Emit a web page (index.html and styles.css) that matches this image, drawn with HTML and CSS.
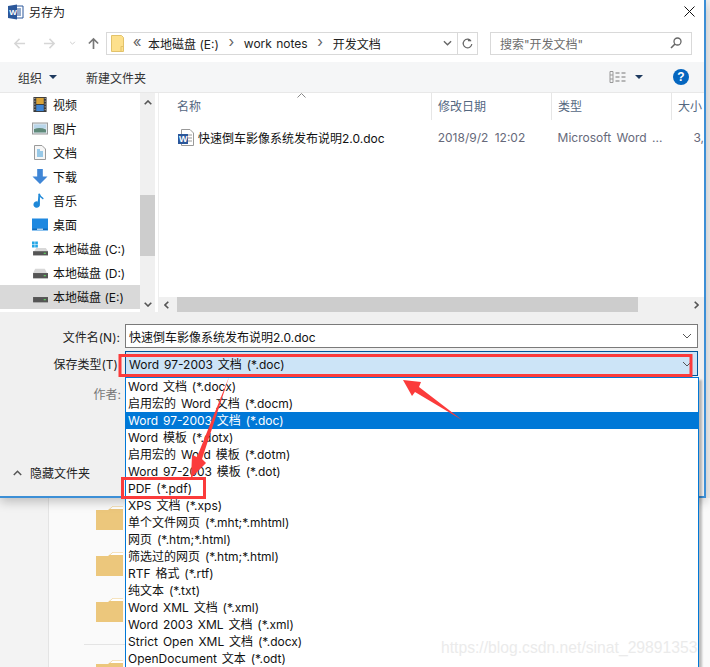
FILE: index.html
```html
<!DOCTYPE html>
<html lang="zh-CN">
<head>
<meta charset="utf-8">
<title>另存为</title>
<link rel="stylesheet" href="styles.css">
</head>
<body>
<div class="stage">
  <div class="dialog">
    <header class="titlebar">
      <svg class="word-icon" viewBox="0 0 16 16"><path d="M7 2h8v12H7z" fill="#fff" stroke="#2b579a"/><path d="M9 5h4M9 7h4M9 9h4M9 11h4" stroke="#2b579a"/><path d="M0 2l9-1.500v15L0 14z" fill="#2b579a"/><text x="1.200" y="11" class="word-w">W</text></svg>
      <span class="title">另存为</span>
      <svg class="close" viewBox="0 0 11 11"><path d="M.5.500l10 10M10.500.500l-10 10" stroke="#111" fill="none"/></svg>
    </header>
    <div class="addressrow">
      <svg class="nav-icon light" viewBox="0 0 14 14"><path d="M13 7H2M7 2L2 7l5 5" fill="none" stroke="currentColor" stroke-width="1.600"/></svg>
      <svg class="nav-icon light" viewBox="0 0 14 14"><path d="M1 7h11M7 2l5 5-5 5" fill="none" stroke="currentColor" stroke-width="1.600"/></svg>
      <svg class="nav-caret" viewBox="0 0 8 5"><path d="M1 1l3 3 3-3" fill="none" stroke="#ccc" stroke-width="1.200"/></svg>
      <svg class="nav-icon dark" viewBox="0 0 14 14"><path d="M7 13V2M2 7l5-5 5 5" fill="none" stroke="currentColor" stroke-width="1.800"/></svg>
      <div class="address">
        <svg class="addr-folder" viewBox="0 0 13 17"><path d="M.5.500h10l2 2v14H.5z" fill="#fde08c" stroke="#e2c26a"/><path d="M10 16.500v-5h2.500" fill="none" stroke="#e2c26a"/></svg>
        <span class="crumb-sep wide">«</span>
        <span class="crumb">本地磁盘 (E:)</span>
        <span class="crumb-sep">›</span>
        <span class="crumb spaced">work notes</span>
        <span class="crumb-sep">›</span>
        <span class="crumb">开发文档</span>
        <span class="addr-fill"></span>
        <svg class="addr-caret" viewBox="0 0 10 6"><path d="M1 1l4 4 4-4" fill="none" stroke="#666" stroke-width="1.500"/></svg>
        <span class="addr-refresh"><svg viewBox="0 0 12 12"><path d="M9.800 3.200A4.700 4.700 0 1 0 10.700 6.500" fill="none" stroke="#666" stroke-width="1.300"/><path d="M6.500.500l3.800 3H6.500z" fill="#666"/></svg></span>
      </div>
      <div class="search">
        <span class="search-text">搜索"开发文档"</span>
        <svg class="search-icon" viewBox="0 0 12 12"><circle cx="7.500" cy="4.500" r="3.500" fill="none" stroke="#666" stroke-width="1.300"/><path d="M5 7l-4 4" stroke="#666" stroke-width="1.600"/></svg>
      </div>
    </div>
    <div class="toolbar">
      <span class="tool">组织</span><span class="tool-caret"></span>
      <span class="tool new">新建文件夹</span>
      <span class="toolbar-fill"></span>
      <svg class="views" viewBox="0 0 16 12"><path d="M.5.500h3v11h-3zM.5 4h3M.5 8h3" fill="none" stroke="#999"/><path d="M6 2h4M12 2h4M6 6h4M12 6h4M6 10h4M12 10h4" stroke="#777"/></svg>
      <span class="tool-caret dark"></span>
      <span class="help">?</span>
    </div>
    <div class="browser">
      <nav class="sidebar">
        <ul class="nav-list">
          <li class="nav-item"><svg class="ni" viewBox="0 0 14 16"><rect width="14" height="16" fill="#3a3a3a"/><rect x="3" y="1" width="8" height="6.500" fill="#d9a43a"/><rect x="3" y="8.500" width="8" height="6.500" fill="#3f86d6"/><path d="M1 1.500h1M1 4.500h1M1 7.500h1M1 10.500h1M1 13.500h1M12 1.500h1M12 4.500h1M12 7.500h1M12 10.500h1M12 13.500h1" stroke="#ddd"/></svg>视频</li>
          <li class="nav-item"><svg class="ni" viewBox="0 0 16 12"><rect x=".5" y=".5" width="15" height="11" fill="#dfe8ee" stroke="#9a9a9a"/><path d="M2 2h12v4H2z" fill="#b9d6ea"/><path d="M2 10V6.500q6-2 12 .5v3z" fill="#5f8a7a"/></svg>图片</li>
          <li class="nav-item"><svg class="ni" viewBox="0 0 12 15"><path d="M.5.500H8l3.500 3.500v10.500H.5z" fill="#f6f6f6" stroke="#9a9a9a"/><path d="M3 5h3M3 7h6M3 9h6M3 11h6" stroke="#3a9bd8"/></svg>文档</li>
          <li class="nav-item"><svg class="ni" viewBox="0 0 16 16"><path d="M5 0h6v8h5l-8 8-8-8h5z" fill="#3f86d6"/></svg>下载</li>
          <li class="nav-item"><svg class="ni" viewBox="0 0 12 18"><path d="M5 1v12.500A3 3 0 1 1 3 11" fill="#1e88d8" stroke="#1e88d8" stroke-width="1.800"/><path d="M5 1q1 4 5 6" fill="none" stroke="#1e88d8" stroke-width="1.800"/></svg>音乐</li>
          <li class="nav-item"><svg class="ni" viewBox="0 0 16 12"><rect width="16" height="12" fill="#1e88e0"/><path d="M.5 10.700h15" stroke="#0d5ea8"/><path d="M5 10.700h6" stroke="#fff"/></svg>桌面</li>
          <li class="nav-item"><svg class="ni" viewBox="0 0 15 13"><path d="M0 0h2.500v2.500H0zM3 0h2.500v2.500H3zM0 3h2.500v2.500H0zM3 3h2.500v2.500H3z" fill="#22a5e5"/><path d="M2 9l2-3h9l2 3z" fill="#d8d8d8"/><rect x="1" y="9" width="14" height="4" fill="#555"/><rect x="11" y="10.500" width="2" height="1" fill="#5fdc5f"/></svg>本地磁盘 (C:)</li>
          <li class="nav-item"><svg class="ni" viewBox="0 0 15 13"><path d="M1 7l2-4h9l2 4z" fill="#d8d8d8"/><rect x="1" y="7" width="14" height="5" fill="#555"/><rect x="11" y="9" width="2" height="1" fill="#5fdc5f"/></svg>本地磁盘 (D:)</li>
          <li class="nav-item selected"><svg class="ni" viewBox="0 0 15 13"><path d="M1 7l2-4h9l2 4z" fill="#d8d8d8"/><rect x="1" y="7" width="14" height="5" fill="#555"/><rect x="11" y="9" width="2" height="1" fill="#5fdc5f"/></svg>本地磁盘 (E:)</li>
        </ul>
        <div class="vscroll">
          <svg class="sb-arrow" viewBox="0 0 8 5"><path d="M.7 4.300L4 1l3.300 3.300" fill="none" stroke="#555" stroke-width="1.600"/></svg>
          <span class="vthumb"></span>
          <svg class="sb-arrow bottom" viewBox="0 0 8 5"><path d="M.7.700L4 4 7.300.700" fill="none" stroke="#555" stroke-width="1.600"/></svg>
        </div>
      </nav>
      <section class="files">
        <div class="file-head">
          <span class="col name">名称</span>
          <span class="col date">修改日期</span>
          <span class="col type">类型</span>
          <span class="col size">大小</span>
          <svg class="sort" viewBox="0 0 9 5"><path d="M.5 4.500l4-4 4 4" fill="none" stroke="#888"/></svg>
        </div>
        <div class="file-row">
          <svg class="doc-icon" viewBox="0 0 16 17"><path d="M3.500.5H12l3.500 3.500v12.500h-12z" fill="#fff" stroke="#999"/><path d="M10 6h4M10 9h4M10 12h4" stroke="#999"/><rect y="5" width="10" height="10" fill="#2b579a"/><text x="1" y="13" class="word-w small">W</text></svg>
          <span class="f-name">快速倒车影像系统发布说明2.0.doc</span>
          <span class="f-date">2018/9/2 12:02</span>
          <span class="f-type">Microsoft Word ...</span>
          <span class="f-size">3,</span>
        </div>
        <div class="file-fill"></div>
        <div class="hscroll">
          <svg class="hs-arrow" viewBox="0 0 5 8"><path d="M4.300.7L1 4l3.300 3.300" fill="none" stroke="#555" stroke-width="1.600"/></svg>
          <span class="hthumb"></span>
          <svg class="hs-arrow" viewBox="0 0 5 8"><path d="M.7.7L4 4 .7 7.300" fill="none" stroke="#555" stroke-width="1.600"/></svg>
        </div>
      </section>
    </div>
    <div class="form">
      <div class="form-row first">
        <label class="f-label">文件名(N):</label>
        <div class="combo"><span class="combo-text">快速倒车影像系统发布说明2.0.doc</span><svg class="combo-caret" viewBox="0 0 10 6"><path d="M1 1l4 4 4-4" fill="none" stroke="#555"/></svg></div>
      </div>
      <div class="form-row second">
        <label class="f-label narrow">保存类型(T)</label>
        <div class="combo active"><span class="combo-text">Word 97-2003 文档 (*.doc)</span><svg class="combo-caret" viewBox="0 0 10 6"><path d="M1 1l4 4 4-4" fill="none" stroke="#555"/></svg></div>
      </div>
      <div class="form-row third">
        <label class="f-label meta">作者:</label>
      </div>
      <div class="hide-row">
        <svg class="hide-caret" viewBox="0 0 9 6"><path d="M.8 5L4.500 1.300 8.200 5" fill="none" stroke="#555" stroke-width="1.500"/></svg>
        <span>隐藏文件夹</span>
      </div>
    </div>
  </div>
  <div class="behind">
    <div class="behind-side"></div>
    <div class="behind-main">
      <svg class="b-folder" viewBox="0 0 27 24"><path d="M0 4h12l5-4h10v24H0z" fill="#ecc77c"/><path d="M14 3l3-2.500h10V3z" fill="#fff"/></svg>
      <svg class="b-folder" viewBox="0 0 27 24"><path d="M0 4h12l5-4h10v24H0z" fill="#ecc77c"/><path d="M14 3l3-2.500h10V3z" fill="#fff"/></svg>
      <svg class="b-folder" viewBox="0 0 27 24"><path d="M0 4h12l5-4h10v24H0z" fill="#ecc77c"/><path d="M14 3l3-2.500h10V3z" fill="#fff"/></svg>
      <span class="b-line"></span>
      <svg class="b-folder last" viewBox="0 0 27 24"><path d="M0 4h12l5-4h10v24H0z" fill="#ecc77c"/><path d="M14 3l3-2.500h10V3z" fill="#fff"/></svg>
    </div>
  </div>
  <ul class="dropdown">
    <li>Word 文档 (*.docx)</li>
    <li>启用宏的 Word 文档 (*.docm)</li>
    <li class="on">Word 97-2003 文档 (*.doc)</li>
    <li>Word 模板 (*.dotx)</li>
    <li>启用宏的 Word 模板 (*.dotm)</li>
    <li>Word 97-2003 模板 (*.dot)</li>
    <li>PDF (*.pdf)</li>
    <li>XPS 文档 (*.xps)</li>
    <li>单个文件网页 (*.mht;*.mhtml)</li>
    <li>网页 (*.htm;*.html)</li>
    <li>筛选过的网页 (*.htm;*.html)</li>
    <li>RTF 格式 (*.rtf)</li>
    <li>纯文本 (*.txt)</li>
    <li>Word XML 文档 (*.xml)</li>
    <li>Word 2003 XML 文档 (*.xml)</li>
    <li>Strict Open XML 文档 (*.docx)</li>
    <li>OpenDocument 文本 (*.odt)</li>
  </ul>
  <svg class="marks" viewBox="0 0 710 667">
    <rect x="120" y="355.500" width="571" height="20" fill="none" stroke="#fb3b3b" stroke-width="3"/>
    <rect x="122.500" y="478.500" width="82" height="19" fill="none" stroke="#fb3b3b" stroke-width="3"/>
    <path d="M403 380L421 382L419 387L462 420L415 392L412 396z" fill="#fb3b3b"/>
    <path d="M229 377L202 459L206 463L191 478L192 455L197 457z" fill="#fb3b3b"/>
  </svg>
  <span class="watermark">https://blog.csdn.net/sinat_29891353</span>
</div>
</body>
</html>
```
FILE: styles.css
```css
* { box-sizing: border-box; }
html, body { margin: 0; padding: 0; }
body { width: 710px; height: 667px; overflow: hidden; background: #f0f0f0; font-family: "Inter", "Noto Sans CJK SC", sans-serif; font-size: 12px; color: #111; }
ul { list-style: none; margin: 0; padding: 0; }
svg { display: block; flex: none; }

.stage { position: relative; width: 710px; height: 667px; overflow: hidden; display: flex; flex-direction: column; }

.dialog { width: 706px; height: 498px; flex: none; background: #fff; border-right: 2px solid #3c8fd6; border-bottom: 2px solid #3c8fd6; display: flex; flex-direction: column; box-shadow: 0 4px 10px rgba(0,0,0,.22); position: relative; z-index: 1; }

.titlebar { height: 24px; flex: none; display: flex; align-items: center; padding: 0 9px 1px 8px; }
.word-icon { width: 16px; height: 16px; margin-right: 5px; }
.word-w { font: bold 8px "Liberation Sans", sans-serif; fill: #fff; }
.word-w.small { font-size: 9px; }
.title { font-size: 12px; flex: 1; color: #222; }
.close { width: 11px; height: 11px; }

.addressrow { height: 38px; flex: none; display: flex; align-items: center; padding: 0 12px 0 13px; margin-top: 0; }
.nav-icon { width: 13px; height: 13px; }
.nav-icon.light { color: #d6d6d6; margin-right: 17px; }
.nav-icon.dark { color: #777; margin-right: 6px; }
.nav-caret { width: 7px; height: 4px; margin: 0 11px 0 -4px; }
.address { width: 372px; height: 23px; flex: none; border: 1px solid #d9d9d9; display: flex; align-items: center; padding-left: 4px; color: #222; }
.addr-folder { width: 13px; height: 17px; margin-right: 5px; }
.crumb-sep { width: 25px; text-align: center; color: #666; font-size: 15px; line-height: 16px; margin-top: -2px; }
.crumb-sep.wide { width: 16px; margin-right: 3px; }
.crumb { white-space: nowrap; }
.crumb.spaced { word-spacing: 1px; }
.addr-fill { flex: 1; }
.addr-caret { width: 9px; height: 6px; margin-right: 5px; }
.addr-refresh { width: 20px; height: 21px; border-left: 1px solid #d9d9d9; display: flex; align-items: center; justify-content: center; }
.addr-refresh svg { width: 11px; height: 11px; }
.search { width: 202px; height: 23px; margin-left: 12px; flex: none; border: 1px solid #d9d9d9; display: flex; align-items: center; justify-content: space-between; padding: 0 9px; color: #6d6d6d; }
.search-icon { width: 12px; height: 12px; }

.toolbar { height: 31px; flex: none; background: #f5f6f7; border-bottom: 1px solid #e8e8e8; display: flex; align-items: center; padding: 0 15px 0 18px; color: #333; }
.tool-caret { width: 0; height: 0; border-left: 4px solid transparent; border-right: 4px solid transparent; border-top: 4px solid #1e3a5f; margin-left: 7px; }
.tool.new { margin-left: 29px; }
.toolbar-fill { flex: 1; }
.views { width: 17px; height: 12px; }
.tool-caret.dark { margin-left: 9px; margin-right: 30px; }
.help { width: 16px; height: 16px; border-radius: 50%; background: #0566bf; color: #fff; font: bold 12px/16px "Liberation Sans", sans-serif; text-align: center; }

.browser { height: 219px; flex: none; display: flex; }
.sidebar { width: 155px; flex: none; display: flex; border-right: 0; }
.nav-list { width: 140px; flex: none; }
.nav-item { height: 24px; display: flex; align-items: center; padding-left: 53px; padding-top: 1px; position: relative; line-height: 22px; color: #111; }
.nav-item.selected { background: #d9d9d9; }
.ni { position: absolute; left: 32px; top: 4px; width: 16px; height: 15px; }
.vscroll { width: 15px; background: #f0f0f0; display: flex; flex-direction: column; align-items: center; padding-top: 7px; margin-bottom: 0; position: relative; }
.sb-arrow { width: 8px; height: 5px; }
.sb-arrow.bottom { margin-top: auto; margin-bottom: 5px; }
.vthumb { position: absolute; left: 0; top: 102px; width: 15px; height: 61px; background: #cdcdcd; }

.files { flex: 1; margin-left: 3px; border-left: 1px solid #eee; display: flex; flex-direction: column; min-width: 0; position: relative; }
.file-head { height: 27px; flex: none; display: flex; color: #54677f; position: relative; line-height: 27px; }
.col { display: block; padding-left: 6px; border-right: 1px solid #e6e6e6; white-space: nowrap; }
.col.name { width: 273px; padding-left: 18px; }
.col.date { width: 120px; }
.col.type { width: 120px; }
.col.size { flex: 1; border: 0; overflow: hidden; }
.sort { position: absolute; left: 138px; top: 0; width: 9px; height: 5px; }
.file-row { height: 34px; flex: none; display: flex; align-items: center; position: relative; color: #66697a; }
.doc-icon { width: 16px; height: 17px; margin-left: 19px; margin-right: 4px; }
.f-name { width: 240px; color: #111; white-space: nowrap; }
.f-date { width: 120px; word-spacing: 3px; }
.f-type { width: 136px; white-space: nowrap; word-spacing: 2px; }
.f-size { white-space: nowrap; }
.file-fill { flex: 1; }
.hscroll { height: 15px; flex: none; background: #f0f0f0; display: flex; align-items: center; justify-content: space-between; padding: 0 5px; position: relative; }
.hs-arrow { width: 5px; height: 8px; }
.hthumb { position: absolute; left: 18px; top: 0; width: 461px; height: 15px; background: #cdcdcd; }

.form { flex: 1; background: #f0f0f0; display: flex; flex-direction: column; position: relative; }
.form-row { display: flex; align-items: center; }
.form-row.first { margin-top: 12px; height: 24px; }
.form-row.second { margin-top: 3px; height: 25px; }
.form-row.third { margin-top: 6px; height: 22px; }
.f-label { width: 120px; text-align: right; flex: none; color: #222; }
.f-label.narrow { width: 118px; margin-right: 2px; }
.f-label.meta { width: 121px; color: #777; }
.combo { margin-left: 5px; width: 573px; height: 100%; background: #fff; border: 1px solid #7a7a7a; display: flex; align-items: center; justify-content: space-between; padding: 0 5px 0 3px; }
.combo.active { background: #cce4f7; border-color: #005499; word-spacing: 1.500px; }
.combo-caret { width: 10px; height: 6px; }
.hide-row { margin-top: 60px; padding-left: 13px; display: flex; align-items: center; gap: 8px; color: #222; }
.hide-caret { width: 9px; height: 6px; }

.behind { flex: 1; display: flex; background: #fafafa; }
.behind-side { width: 49px; background: #f3f3f3; border-right: 1px solid #e4e4e4; }
.behind-main { flex: 1; padding: 8px 0 0 47px; display: flex; flex-direction: column; position: relative; }
.b-folder { width: 27px; height: 24px; margin-bottom: 22px; }
.b-line { height: 1px; width: 41px; margin: 0 0 0 -12px; background: #e4e4e4; }
.b-folder.last { margin-top: 15px; }

.dropdown { position: absolute; z-index: 2; left: 125px; top: 377px; width: 574px; height: 290px; background: #fff; border: 1px solid #0078d7; border-bottom: 0; border-top-color: #0078d7; box-shadow: 3px 3px 2px rgba(0,0,0,.25); color: #111; word-spacing: 1.500px; }
.dropdown li { height: 17px; line-height: 17px; padding-left: 2px; white-space: nowrap; }
.dropdown li.on { background: #0078d7; color: #fff; margin: 0; }
.marks { position: absolute; z-index: 3; left: 0; top: 0; width: 710px; height: 667px; pointer-events: none; }
.watermark { position: absolute; z-index: 4; left: 441px; top: 639px; font: 15.700px "Liberation Sans", sans-serif; color: #ebebeb; white-space: nowrap; }
```
